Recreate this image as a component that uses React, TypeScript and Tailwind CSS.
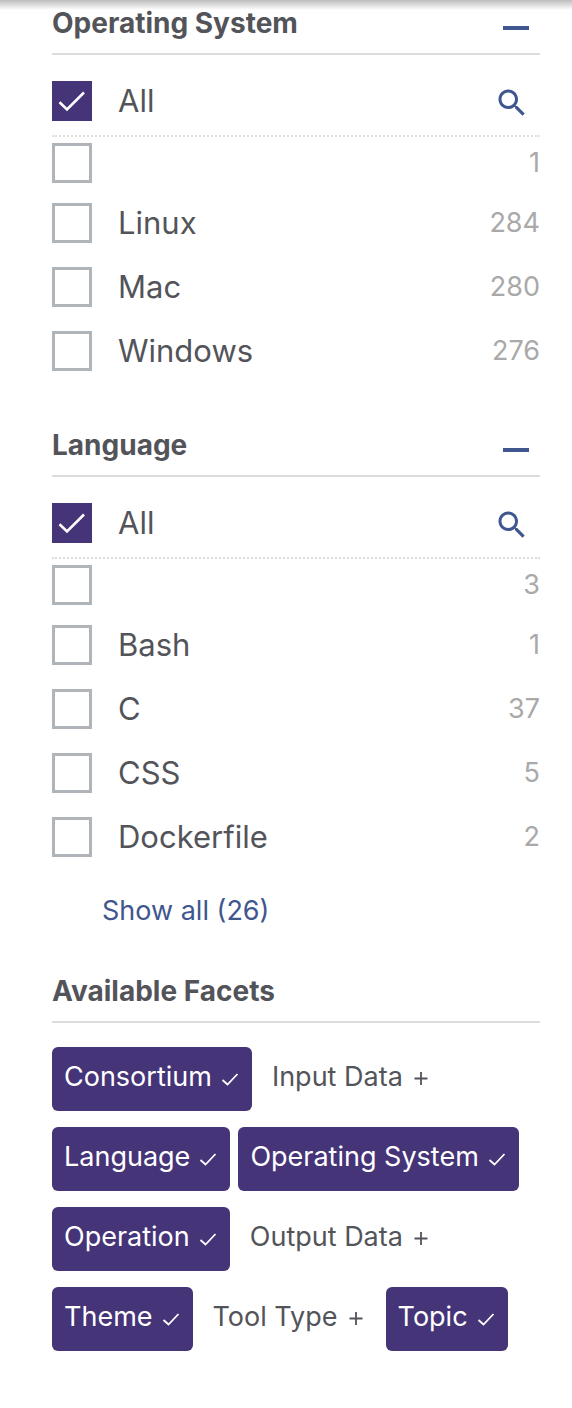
import * as React from 'react';
import { clsx } from 'clsx';

type FacetOption = {
  name: string;
  count: number;
};

type FacetSectionProps = {
  title: string;
  options: FacetOption[];
  total?: number;
};

const operatingSystems: FacetOption[] = [
  { name: '', count: 1 },
  { name: 'Linux', count: 284 },
  { name: 'Mac', count: 280 },
  { name: 'Windows', count: 276 },
];

const languages: FacetOption[] = [
  { name: '', count: 3 },
  { name: 'Bash', count: 1 },
  { name: 'C', count: 37 },
  { name: 'CSS', count: 5 },
  { name: 'Dockerfile', count: 2 },
];

const availableFacets = [
  { name: 'Consortium', active: true },
  { name: 'Input Data', active: false },
  { name: 'Language', active: true },
  { name: 'Operating System', active: true },
  { name: 'Operation', active: true },
  { name: 'Output Data', active: false },
  { name: 'Theme', active: true },
  { name: 'Tool Type', active: false },
  { name: 'Topic', active: true },
];

const Checkbox = (props: React.ComponentProps<'input'>) => (
  <span className="grid size-10 shrink-0">
    <input
      type="checkbox"
      className="peer col-start-1 row-start-1 size-10 appearance-none border-3 border-[#afb4bb] bg-white checked:border-[#453478] checked:bg-[#453478]"
      {...props}
    />
    <svg
      viewBox="0 0 40 40"
      className="pointer-events-none invisible col-start-1 row-start-1 size-10 peer-checked:visible"
      fill="none"
      stroke="white"
      strokeWidth="2.6"
    >
      <path d="M7.5 21.3 15 28.4 32 11.5" />
    </svg>
  </span>
);

const SectionHeader = ({
  title,
  children,
}: {
  title: string;
  children?: React.ReactNode;
}) => (
  <div className="flex justify-between border-b-2 border-[#dcdcdc] pt-[7px] pb-3.5">
    <h2 className="text-[28px] leading-8 font-bold">{title}</h2>
    {children}
  </div>
);

const FacetSection = ({ title, options, total }: FacetSectionProps) => {
  const [open, setOpen] = React.useState(true);
  const [selected, setSelected] = React.useState<string[]>([]);

  const toggle = (name: string) => {
    setSelected((prev) =>
      prev.includes(name) ? prev.filter((n) => n !== name) : [...prev, name],
    );
  };

  return (
    <section>
      <SectionHeader title={title}>
        <button
          aria-label={`Toggle ${title}`}
          aria-expanded={open}
          onClick={() => setOpen(!open)}
          className="flex w-12 items-end justify-center pb-[3px] text-[#3f568f]"
        >
          <svg viewBox="0 0 26 16" className="h-4 w-[26px]">
            <path d="M0 6h26v4H0z" fill="currentColor" />
          </svg>
        </button>
      </SectionHeader>

      {open && (
        <>
          <div className="flex items-end justify-between border-b-2 border-dotted border-[#dcdcdc] pt-[26px] pr-2.5 pb-3.5">
            <label className="flex items-center gap-[26px] text-[31px] leading-10">
              <Checkbox
                checked={selected.length === 0}
                onChange={() => setSelected([])}
              />
              All
            </label>
            <button aria-label={`Search ${title}`} className="text-[#3f568f]">
              <svg viewBox="0 0 24 24" className="size-9" fill="currentColor">
                <path d="M15.5 14h-.79l-.28-.27C15.41 12.59 16 11.11 16 9.5 16 5.91 13.09 3 9.5 3S3 5.91 3 9.5 5.91 16 9.5 16c1.61 0 3.09-.59 4.23-1.57l.27.28v.79l5 4.99L20.49 19l-4.99-5zm-6 0C7.01 14 5 11.99 5 9.5S7.01 5 9.5 5 14 7.01 14 9.5 11.99 14 9.5 14z" />
              </svg>
            </button>
          </div>

          <ul>
            {options.map(({ name, count }) => (
              <li key={name}>
                <label
                  className={clsx(
                    'flex items-center gap-[26px] text-[31px] leading-10',
                    name ? 'py-3' : 'pt-1.5 pb-2',
                  )}
                >
                  <Checkbox
                    checked={selected.includes(name)}
                    onChange={() => toggle(name)}
                  />
                  <span className="grow">{name}</span>
                  <span className="text-[27px] text-[#a9a9a9]">{count}</span>
                </label>
              </li>
            ))}
          </ul>

          {total && (
            <button className="my-[22px] ml-[50px] block text-[27px] leading-10 text-[#3f568f]">
              Show all ({total})
            </button>
          )}
        </>
      )}
    </section>
  );
};

const FacetChip = ({ name, active }: { name: string; active: boolean }) => (
  <button
    className={clsx(
      'flex h-16 items-start gap-2 rounded-md px-3 pt-3',
      active ? 'bg-[#453478] text-white' : 'text-[#53545a]',
    )}
  >
    <span className="text-[27px] leading-9">{name}</span>
    <svg
      viewBox="0 0 20 36"
      className="h-9 w-5"
      fill="none"
      stroke="currentColor"
      strokeWidth="1.8"
    >
      <path
        d={active ? 'M2.5 21 7.5 25.5 17.5 15' : 'M3.5 19.5h13M10 13v13'}
      />
    </svg>
  </button>
);

export default function App() {
  return (
    <div className="relative bg-white pr-8 pl-[52px] font-['Inter','Liberation_Sans',sans-serif] text-[#53545a]">
      <div className="pointer-events-none absolute inset-x-0 top-0 h-2.5 bg-linear-to-b from-[#bdbdbd] to-transparent" />

      <div className="flex flex-col gap-[39px]">
        <FacetSection title="Operating System" options={operatingSystems} />
        <FacetSection title="Language" options={languages} total={26} />
      </div>

      <section className="mt-[15px] pb-14">
        <SectionHeader title="Available Facets" />
        <div className="flex flex-wrap gap-x-2 gap-y-4 pt-6">
          {availableFacets.map((facet) => (
            <FacetChip key={facet.name} {...facet} />
          ))}
        </div>
      </section>
    </div>
  );
}
